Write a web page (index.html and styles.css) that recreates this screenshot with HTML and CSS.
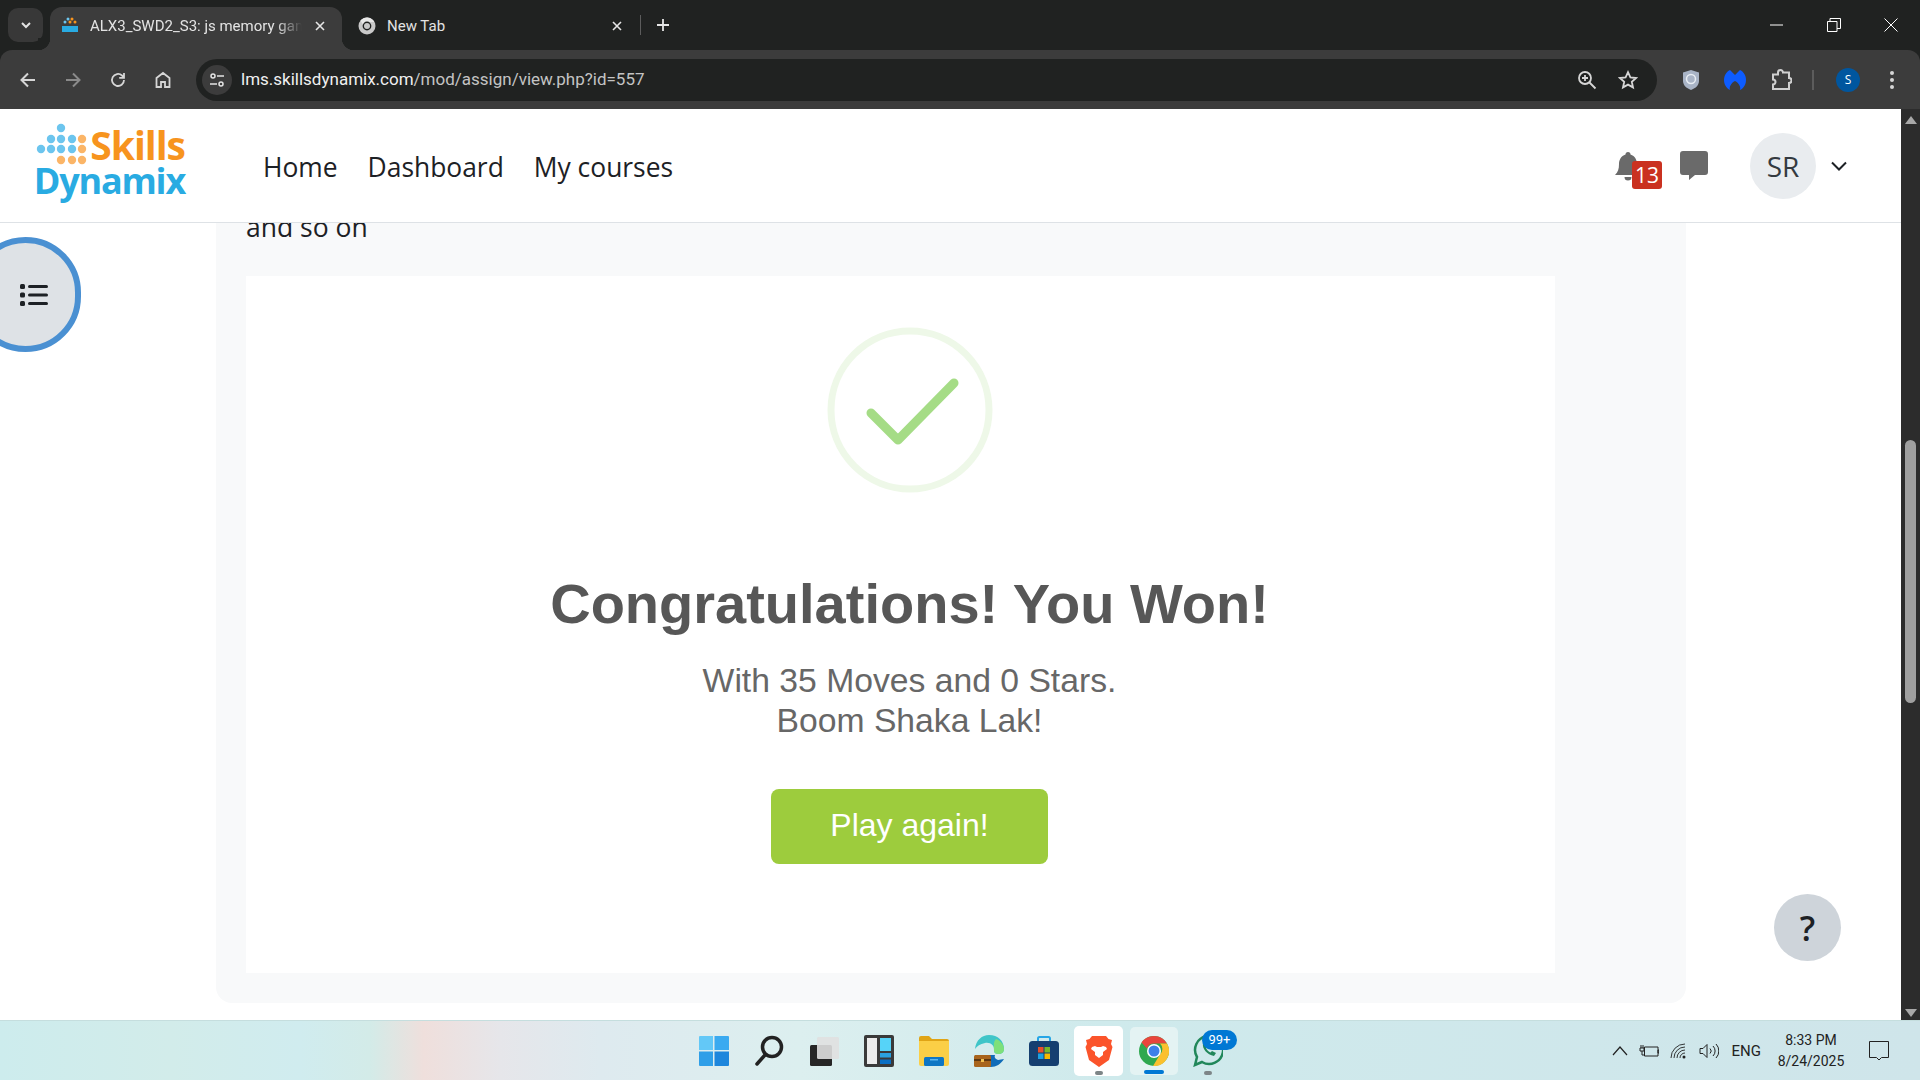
FILE: index.html
```html
<!DOCTYPE html>
<html lang="en">
<head>
  <meta charset="UTF-8" />
  <title>ALX3_SWD2_S3: js memory game</title>
  <link rel="stylesheet" href="styles.css">
</head>
<body>
  <!-- Browser tabs -->
  <div class="tabstrip">
    <button class="tab-search">
      <svg width="14" height="14" viewBox="0 0 14 14"><path d="M3 5l4 4 4-4" fill="none" stroke="#e3e3e3" stroke-width="2"/></svg>
    </button>
    <div class="tab tab-active">
      <svg class="favicon" width="20" height="20" viewBox="0 0 20 20">
        <circle cx="8" cy="3" r="1.5" fill="#6cc5ee"/><circle cx="12" cy="3" r="1.5" fill="#f7941e"/><circle cx="5" cy="6" r="1.5" fill="#6cc5ee"/><circle cx="10" cy="6" r="1.5" fill="#f7941e"/><circle cx="15" cy="6" r="1.5" fill="#f7941e"/>
        <rect x="2" y="10" width="16" height="6" fill="#29abe2"/>
      </svg>
      <span class="tab-title">ALX3_SWD2_S3: js memory game</span>
      <svg class="tab-close" width="12" height="12" viewBox="0 0 12 12"><path d="M2 2l8 8M10 2l-8 8" stroke="#e6e6e6" stroke-width="1.6"/></svg>
    </div>
    <div class="tab">
      <svg class="favicon" width="18" height="18" viewBox="0 0 18 18">
        <circle cx="9" cy="9" r="8.500" fill="#c9c9c9"/><path d="M9 5h7.400A8.500 8.500 0 0 0 2.400 3.600L6 9a3 3 0 0 1 3-4z" fill="#e8e8e8"/><circle cx="9" cy="9" r="4.400" fill="#202221"/><circle cx="9" cy="9" r="3" fill="#c9c9c9"/>
      </svg>
      <span class="tab-title">New Tab</span>
      <svg class="tab-close" width="12" height="12" viewBox="0 0 12 12"><path d="M2 2l8 8M10 2l-8 8" stroke="#e6e6e6" stroke-width="1.6"/></svg>
    </div>
    <div class="tab-sep"></div>
    <svg class="tab-new" width="14" height="14" viewBox="0 0 14 14"><path d="M7 1v12M1 7h12" stroke="#e6e6e6" stroke-width="1.8"/></svg>
    <div class="window-btns">
      <svg width="14" height="14" viewBox="0 0 14 14"><path d="M0 7h13" stroke="#fff" stroke-width="1"/></svg>
      <svg width="14" height="14" viewBox="0 0 14 14"><path d="M.5 3.500h9.500v10H.5zM3 3.500V.5h10.500v10H10" fill="none" stroke="#fff"/></svg>
      <svg width="14" height="14" viewBox="0 0 14 14"><path d="M.5.5l13 13M13.500.5l-13 13" stroke="#fff"/></svg>
    </div>
  </div>

  <!-- Browser toolbar -->
  <div class="toolbar">
    <svg class="tb-icon" width="20" height="20" viewBox="0 0 20 20"><path d="M17 10H4M10 3.500 3.500 10l6.500 6.500" fill="none" stroke="#d6d6d6" stroke-width="2"/></svg>
    <svg class="tb-icon" width="20" height="20" viewBox="0 0 20 20"><path d="M3 10h13M10 3.500l6.500 6.500-6.500 6.500" fill="none" stroke="#8a8a8a" stroke-width="2"/></svg>
    <svg class="tb-icon" width="20" height="20" viewBox="0 0 20 20"><path d="M16 10a6 6 0 1 1-2-4.500L16 7.500M16 3v4.800h-4.800" fill="none" stroke="#d6d6d6" stroke-width="1.800"/></svg>
    <svg class="tb-icon" width="20" height="20" viewBox="0 0 20 20"><path d="M3.500 17V8L10 3l6.500 5v9h-4.500v-5H8v5z" fill="none" stroke="#d6d6d6" stroke-width="1.800"/></svg>
    <div class="omnibox">
      <span class="site-info">
        <svg width="18" height="18" viewBox="0 0 18 18"><g fill="none" stroke="#e3e3e3" stroke-width="1.500"><circle cx="5" cy="5" r="2"/><path d="M9 5h7M2 13h7"/><circle cx="13" cy="13" r="2"/></g></svg>
      </span>
      <span class="url"><span class="url-host">lms.skillsdynamix.com</span>/mod/assign/view.php?id=557</span>
      <svg class="omni-zoom" width="20" height="20" viewBox="0 0 20 20"><g fill="none" stroke="#d6d6d6" stroke-width="1.800"><circle cx="8" cy="8" r="6"/><path d="M12.500 12.500 18.500 18.500M5 8h6M8 5v6"/></g></svg>
      <svg class="omni-star" width="20" height="20" viewBox="0 0 20 20"><path d="M10 2.200l2.400 5.200 5.600.6-4.200 3.800 1.200 5.600L10 14.600l-5 2.800 1.200-5.600L2 8l5.600-.6z" fill="none" stroke="#d6d6d6" stroke-width="1.800"/></svg>
    </div>
    <div class="ext-icons">
      <svg width="18" height="22" viewBox="0 0 18 22"><path d="M9 1l8 2.500V12c0 4.500-4 7.500-8 9-4-1.500-8-4.500-8-9V3.500z" fill="#a9b4c6"/><circle cx="9" cy="10" r="4.500" fill="none" stroke="#e8edf3" stroke-width="1.500"/></svg>
      <svg width="22" height="20" viewBox="0 0 22 20"><path d="M6 0 11 5l5-5c4 2 6 6 6 10 0 4-2 8-6 10 1-3-1-7-5-9-4 2-6 6-5 9-4-2-6-6-6-10C0 6 2 2 6 0z" fill="#0d5cff"/></svg>
      <svg width="22" height="22" viewBox="0 0 22 22"><path d="M8 3.500a2.500 2.500 0 0 1 5 0H19v5.500a2.500 2.500 0 0 1 0 5V20H3v-4.500a2.500 2.500 0 0 0 0-5V5.500h5z" fill="none" stroke="#d0d0d0" stroke-width="2"/></svg>
      <span class="ext-sep"></span>
      <span class="profile-dot">S</span>
      <svg class="ext-menu" width="6" height="20" viewBox="0 0 6 20"><g fill="#d6d6d6"><circle cx="3" cy="3" r="2"/><circle cx="3" cy="10" r="2"/><circle cx="3" cy="17" r="2"/></g></svg>
    </div>
  </div>

  <div class="viewport">
    <div class="page">
      <!-- Site header -->
      <header class="site-header">
        <div class="logo">
          <svg class="logo-dots" width="52" height="42" viewBox="0 0 52 42">
            <g fill="#6cc5ee">
              <circle cx="25" cy="5" r="4.200"/>
              <circle cx="15" cy="16" r="4.200"/><circle cx="25" cy="16" r="4.200"/><circle cx="36" cy="16" r="4.200"/>
              <circle cx="5" cy="26" r="4.200"/><circle cx="15" cy="26" r="4.200"/><circle cx="25" cy="26" r="4.200"/><circle cx="36" cy="26" r="4.200"/>
            </g>
            <g fill="#fbb567">
              <circle cx="46" cy="16" r="4.200"/><circle cx="46" cy="26" r="4.200"/>
              <circle cx="25" cy="37" r="4.200"/><circle cx="36" cy="37" r="4.200"/><circle cx="46" cy="37" r="4.200"/>
            </g>
          </svg>
          <span class="logo-skills">Skills</span>
          <span class="logo-dynamix">Dynamix</span>
        </div>
        <nav class="main-nav">
          <a href="#">Home</a>
          <a href="#">Dashboard</a>
          <a href="#">My courses</a>
        </nav>
        <div class="user-area">
          <div class="bell">
            <svg width="26" height="30" viewBox="0 0 26 30"><path d="M13 0a2.500 2.500 0 0 1 2.500 2.500C20 4 22 8 22 12c0 5 1 8 4 11H0c3-3 4-6 4-11 0-4 2-8 6.500-9.500A2.500 2.500 0 0 1 13 0zM9.500 25h7a3.500 3.500 0 0 1-7 0z" fill="#6a6a6a"/></svg>
            <span class="bell-count">13</span>
          </div>
          <svg class="chat" width="28" height="29" viewBox="0 0 28 29"><path d="M3 0h22a3 3 0 0 1 3 3v18a3 3 0 0 1-3 3H15l-6 5v-5H3a3 3 0 0 1-3-3V3a3 3 0 0 1 3-3z" fill="#6a6a6a"/></svg>
          <div class="avatar">SR</div>
          <svg class="user-caret" width="16" height="10" viewBox="0 0 16 10"><path d="M1 1.500l7 7 7-7" fill="none" stroke="#1d2125" stroke-width="2"/></svg>
        </div>
      </header>

      <!-- Assignment content, scrolled part way down -->
      <main class="content">
        <button class="drawer-toggle">
          <svg width="30" height="26" viewBox="0 0 30 26">
            <g fill="#1d2125"><rect x="1" y="2" width="5" height="5" rx="1.500"/><rect x="1" y="10.500" width="5" height="5" rx="1.500"/><rect x="1" y="19" width="5" height="5" rx="1.500"/>
            <rect x="9" y="3" width="20" height="3" rx="1.500"/><rect x="9" y="11.500" width="20" height="3" rx="1.500"/><rect x="9" y="20" width="20" height="3" rx="1.500"/></g>
          </svg>
        </button>
        <section class="panel">
          <p class="panel-text">and so on</p>
          <div class="win-card">
            <svg class="win-check" width="166" height="166" viewBox="0 0 166 166">
              <circle cx="83" cy="83" r="79" fill="none" stroke="#eef8e8" stroke-width="7"/>
              <path d="M44 86l27 27 56-57" fill="none" stroke="#a5dc86" stroke-width="9" stroke-linecap="round" stroke-linejoin="round"/>
            </svg>
            <h2 class="win-title">Congratulations! You Won!</h2>
            <p class="win-text">With 35 Moves and 0 Stars.<br>Boom Shaka Lak!</p>
            <button class="play-again">Play again!</button>
          </div>
        </section>
        <button class="help-btn">?</button>
      </main>
    </div>

    <!-- Browser scrollbar -->
    <div class="scrollbar">
      <svg width="14" height="10" viewBox="0 0 14 10"><path d="M7 1l6 8H1z" fill="#a8a8a8"/></svg>
      <div class="scroll-track"><div class="scroll-thumb"></div></div>
      <svg width="14" height="10" viewBox="0 0 14 10"><path d="M7 9l6-8H1z" fill="#a8a8a8"/></svg>
    </div>
  </div>

  <!-- Windows taskbar -->
  <footer class="taskbar">
    <div class="task-apps">
      <div class="app">
        <svg width="30" height="30" viewBox="0 0 30 30"><path d="M0 1a1 1 0 0 1 1-1h13v14H0z" fill="#63c8f7"/><path d="M15.500 0H29a1 1 0 0 1 1 1v13H15.500z" fill="#3aaaf0"/><path d="M0 15.500h14V30H1a1 1 0 0 1-1-1z" fill="#2f9fe8"/><path d="M15.500 15.500H30V29a1 1 0 0 1-1 1H15.500z" fill="#1d86dc"/></svg>
      </div>
      <div class="app">
        <svg width="30" height="32" viewBox="0 0 30 32"><circle cx="18" cy="12" r="9.500" fill="none" stroke="#222" stroke-width="3.500"/><path d="M11 20 3 29" stroke="#222" stroke-width="3.500" stroke-linecap="round"/></svg>
      </div>
      <div class="app">
        <svg width="30" height="30" viewBox="0 0 30 30"><rect x="1" y="9" width="22" height="21" rx="1.500" fill="#262626"/><rect x="8" y="1" width="22" height="22" rx="1.500" fill="#e0e0e0" opacity=".9"/></svg>
      </div>
      <div class="app">
        <svg width="30" height="32" viewBox="0 0 30 32"><rect width="30" height="32" rx="2" fill="#3a3a3a"/><rect x="3" y="3" width="10" height="26" fill="#ececec"/><rect x="16" y="3" width="11" height="13" fill="#56d3f8"/><rect x="16" y="18" width="11" height="4.500" fill="#2aa2e0"/><rect x="16" y="24.500" width="11" height="4.500" fill="#0a6fc4"/></svg>
      </div>
      <div class="app">
        <svg width="30" height="30" viewBox="0 0 30 30"><path d="M0 2a2 2 0 0 1 2-2h8l3 3h15a2 2 0 0 1 2 2v3H0z" fill="#e0a415"/><path d="M0 5h30v23a2 2 0 0 1-2 2H2a2 2 0 0 1-2-2z" fill="#fbcf46"/><rect x="5" y="21" width="20" height="9" rx="1.500" fill="#0e76c4"/><rect x="11" y="23" width="8" height="1.500" fill="#5ab6ef"/></svg>
      </div>
      <div class="app">
        <svg width="30" height="32" viewBox="0 0 30 32"><path d="M1 14C2 5 8 0 15 0c9 0 15 6 15 14 0 3-2 5-6 5-2 0-4-1-4-3 1-6-4-9-9-8-5 1-8 3-10 6z" fill="#3fc5c8"/><path d="M22 4c5 2 8 6 8 10 0 3-2 5-6 5-2 0-4-1-4-3 0-5-1-9 2-12z" fill="#7ee07a"/><path d="M10 32c-5-2-9-6-9-12h20c-1 2 0 4 3 5l6-1c-3 5-8 8-13 8z" fill="#0f6cb8"/><rect x="0" y="20" width="17" height="12" rx="1.500" fill="#a8641c"/><rect x="0" y="24" width="17" height="2" fill="#5e3710"/><rect x="7" y="24" width="3" height="3" fill="#f2c04f"/></svg>
      </div>
      <div class="app">
        <svg width="30" height="30" viewBox="0 0 30 30"><path d="M9 5V2.500A1.500 1.500 0 0 1 10.500 1h9A1.500 1.500 0 0 1 21 2.500V5" fill="none" stroke="#27a6e6" stroke-width="2"/><rect y="5" width="30" height="25" rx="3.500" fill="#153f70"/><rect x="9" y="11" width="5.500" height="5.500" fill="#e8502a"/><rect x="15.500" y="11" width="5.500" height="5.500" fill="#76b82a"/><rect x="9" y="17.500" width="5.500" height="5.500" fill="#1ba1e2"/><rect x="15.500" y="17.500" width="5.500" height="5.500" fill="#f7b900"/></svg>
      </div>
      <div class="app app-pinned">
        <svg width="28" height="32" viewBox="0 0 28 32"><path d="M7 1h14l2.500 3L27 5l-1 4 1.500 3-3.500 13-10 7-10-7L.5 12 2 9 1 5l3.500-1z" fill="#fb542b"/><path d="M7 12l3-1 2 1h4l2-1 3 1 1 2-4 3v3l-4 3-4-3v-3l-4-3z" fill="#fff"/></svg>
        <span class="run-dot"></span>
      </div>
      <div class="app app-active">
        <svg width="30" height="30" viewBox="0 0 30 30"><circle cx="15" cy="15" r="15" fill="#2fa84f"/><path d="M15 0a15 15 0 0 1 13 7.500H15a7.500 7.500 0 0 0-7 5L2.500 6.500A15 15 0 0 1 15 0z" fill="#e8453c"/><path d="M28 7.500A15 15 0 0 1 14 30l7-11.500A7.500 7.500 0 0 0 21 7.500z" fill="#fbc02d"/><circle cx="15" cy="15" r="7" fill="#fff"/><circle cx="15" cy="15" r="5.500" fill="#3d7fe8"/></svg>
        <span class="run-bar"></span>
      </div>
      <div class="app app-whatsapp">
        <svg width="30" height="32" viewBox="0 0 30 32"><path d="M2 30l2-8A14 14 0 1 1 9 27z" fill="none" stroke="#21875a" stroke-width="2.500"/><path d="M10 9c-1 4 4 11 11 12l2-3-4-2-1.500 1.500c-2-1-3.500-2.500-4.500-4.500l1.500-1.500L13 8z" fill="#21875a"/></svg>
        <span class="app-badge">99+</span>
        <span class="run-dot"></span>
      </div>
    </div>
    <div class="tray">
      <svg width="16" height="10" viewBox="0 0 16 10"><path d="M1 9l7-8 7 8" fill="none" stroke="#222" stroke-width="1.200"/></svg>
      <svg width="20" height="14" viewBox="0 0 20 14"><path d="M5.500 3H19v9H5.500zM19 6h1v3h-1zM2 1v3M4 1v3M1 4h4v3H1zM3 7v4h2.500" fill="none" stroke="#222"/></svg>
      <svg width="18" height="16" viewBox="0 0 18 16"><g fill="none" stroke="#222" stroke-width=".9"><path d="M1 15A14 14 0 0 1 15 1M4 15A11 11 0 0 1 15 4M7 15a8 8 0 0 1 8-8M10 15a5 5 0 0 1 5-5"/></g><circle cx="14" cy="14" r="1.500" fill="#222"/></svg>
      <svg width="20" height="16" viewBox="0 0 20 16"><g fill="none" stroke="#222"><path d="M1 5.500h3L8 1.500v13l-4-4H1zM11 5.500a3.500 3.500 0 0 1 0 5M14 3a7 7 0 0 1 0 10M17 1a10 10 0 0 1 0 14"/></g></svg>
      <span class="tray-lang">ENG</span>
      <div class="tray-clock"><span>8:33 PM</span><span>8/24/2025</span></div>
      <svg class="tray-notif" width="20" height="20" viewBox="0 0 20 20"><path d="M.5.500h19v16h-7L10 19l-2.500-2.500h-7z" fill="none" stroke="#222"/></svg>
    </div>
  </footer>
</body>
</html>
```

FILE: styles.css
```css
* {
  box-sizing: border-box;
}

html, body {
  height: 100%;
}

body {
  margin: 0;
  display: flex;
  flex-direction: column;
  height: 1080px;
  overflow: hidden;
  font-family: "Open Sans", "Noto Sans", sans-serif;
  background-color: #202221;
}

button {
  border: none;
  padding: 0;
  font-family: inherit;
}

/* Tabs */
.tabstrip {
  height: 50px;
  flex: none;
  display: flex;
  align-items: flex-end;
  background-color: #202221;
  padding-left: 8px;
}

.tab-search {
  width: 35px;
  height: 34px;
  margin-bottom: 8px;
  border-radius: 10px;
  background-color: #383838;
  display: flex;
  align-items: center;
  justify-content: center;
}

.tab {
  width: 292px;
  height: 43px;
  margin-left: 7px;
  padding: 0 16px 6px 10px;
  display: flex;
  align-items: center;
  border-radius: 12px 12px 0 0;
  color: #e3e3e3;
  font-family: "Roboto", sans-serif;
  font-size: 15px;
  position: relative;
}

.tab + .tab {
  width: 284px;
  margin-left: 0;
  padding-left: 16px;
  padding-right: 3px;
}

.tab + .tab .favicon {
  margin-right: 11px;
}

.tab-active {
  background-color: #3c3c3c;
}

.tab-active::before,
.tab-active::after {
  content: "";
  position: absolute;
  bottom: 0;
  width: 12px;
  height: 12px;
}

.tab-active::before {
  left: -12px;
  background: radial-gradient(circle at 0 0, #202221 12px, #3c3c3c 12.5px);
}

.tab-active::after {
  right: -12px;
  background: radial-gradient(circle at 100% 0, #202221 12px, #3c3c3c 12.5px);
}

.favicon {
  flex: none;
  margin-right: 10px;
}

.tab-title {
  flex: 1;
  white-space: nowrap;
  overflow: hidden;
}

.tab-active .tab-title {
  -webkit-mask-image: linear-gradient(90deg, #000 88%, transparent 100%);
  mask-image: linear-gradient(90deg, #000 88%, transparent 100%);
}

.tab-close {
  flex: none;
  margin-left: 12px;
}

.tab-sep {
  width: 1px;
  height: 20px;
  margin: 0 0 15px 14px;
  background-color: #5c5c5c;
}

.tab-new {
  margin: 0 0 18px 15px;
}

.window-btns {
  margin-left: auto;
  width: 150px;
  padding-right: 22px;
  align-self: center;
  display: flex;
  justify-content: space-between;
}

/* Toolbar */
.toolbar {
  height: 59px;
  flex: none;
  display: flex;
  align-items: center;
  background-color: #3c3c3c;
  border-radius: 12px 12px 0 0;
  padding: 0 25px 0 18px;
}

.tb-icon {
  flex: none;
  margin-right: 25px;
}

.omnibox {
  width: 1462px;
  height: 42px;
  margin-left: -2px;
  padding-right: 19px;
  display: flex;
  align-items: center;
  border-radius: 21px;
  background-color: #202221;
  color: #c4c4c4;
  font-family: "Roboto", sans-serif;
  font-size: 17px;
}

.site-info {
  width: 30px;
  height: 30px;
  margin: 0 9px 0 6px;
  display: flex;
  align-items: center;
  justify-content: center;
  border-radius: 50%;
  background-color: #3c3c3c;
}

.url {
  flex: 1;
  padding-bottom: 2px;
}

.url-host {
  color: #f0f0f0;
}

.omni-star {
  margin-left: 21px;
}

.ext-icons {
  margin-left: 25px;
  display: flex;
  align-items: center;
  gap: 24px;
}

.ext-sep {
  width: 2px;
  height: 20px;
  margin: 0 -2px 0 -4px;
  background-color: #5c5c5c;
}

.ext-menu {
  margin-left: 5px;
}

.profile-dot {
  width: 24px;
  height: 24px;
  border-radius: 50%;
  background-color: #00569f;
  color: #fff;
  font-size: 12px;
  line-height: 24px;
  text-align: center;
}

/* Page */
.viewport {
  flex: 1;
  min-height: 0;
  display: flex;
  background-color: #fff;
}

.page {
  flex: 1;
  min-width: 0;
  display: flex;
  flex-direction: column;
}

.site-header {
  height: 114px;
  flex: none;
  display: flex;
  align-items: center;
  border-bottom: 1px solid #dee2e6;
  background-color: #fff;
  padding-left: 35px;
  position: relative;
  z-index: 2;
}

.logo {
  position: relative;
  width: 152px;
  height: 82px;
  margin-top: -3px;
  flex: none;
}

.logo-dots {
  position: absolute;
  left: 1px;
  top: 0;
}

.logo-skills,
.logo-dynamix {
  position: absolute;
  right: 2px;
  font-family: "Open Sans", sans-serif;
  font-weight: 700;
  line-height: 32px;
  white-space: nowrap;
}

.logo-skills {
  top: 6px;
  color: #f7941e;
  font-size: 39px;
  letter-spacing: -1px;
}

.logo-dynamix {
  top: 42px;
  color: #29abe2;
  font-size: 36px;
  letter-spacing: -1.2px;
}

.main-nav {
  display: flex;
  gap: 30px;
  margin: 2px 0 0 76px;
  font-size: 26.4px;
}

.main-nav a {
  color: #1d2125;
  text-decoration: none;
}

.user-area {
  margin-left: auto;
  padding-right: 54px;
  display: flex;
  align-items: center;
}

.bell {
  position: relative;
  width: 26px;
  height: 30px;
  margin-top: 2px;
}

.bell-count {
  position: absolute;
  left: 17px;
  top: 9px;
  width: 30px;
  height: 28px;
  border-radius: 3px;
  background-color: #ca3120;
  color: #fff;
  font-size: 21px;
  line-height: 28px;
  text-align: center;
}

.chat {
  margin: 0 0 0 39px;
}

.avatar {
  width: 66px;
  height: 66px;
  margin-left: 42px;
  border-radius: 50%;
  background-color: #e9ecef;
  color: #343a40;
  font-size: 28px;
  line-height: 66px;
  text-align: center;
}

.user-caret {
  margin-left: 15px;
}

.content {
  flex: 1;
  min-height: 0;
  position: relative;
  overflow: hidden;
  padding-left: 216px;
}

.drawer-toggle {
  position: absolute;
  left: -30px;
  top: 14px;
  width: 111px;
  height: 115px;
  display: flex;
  align-items: center;
  justify-content: center;
  padding-left: 16px;
  border: 6px solid #4a90d2;
  border-radius: 58px;
  background-color: #dee2e6;
}

.panel {
  display: flow-root;
  width: 1470px;
  height: 780px;
  padding: 0 30px;
  border-radius: 0 0 16px 16px;
  background-color: #f8f9fa;
}

.panel-text {
  margin: -14px 0 0;
  height: 67px;
  color: #1d2125;
  font-size: 26.5px;
  line-height: 36px;
}

.win-card {
  width: 1309px;
  height: 697px;
  padding: 51px 0 0 18px;
  display: flex;
  flex-direction: column;
  align-items: center;
  background-color: #fff;
  font-family: "Liberation Sans", Arial, sans-serif;
}

.win-title {
  margin: 75px 0 0;
  color: #575757;
  font-size: 56px;
  line-height: 72px;
}

.win-text {
  margin: 20px 0 0;
  color: #676767;
  font-size: 33.7px;
  line-height: 40px;
  text-align: center;
}

.play-again {
  width: 277px;
  height: 75px;
  margin-top: 49px;
  padding-bottom: 2px;
  border-radius: 8px;
  background-color: #9dcc3d;
  color: #fff;
  font-family: inherit;
  font-size: 32px;
}

.help-btn {
  position: absolute;
  left: 1774px;
  top: 671px;
  width: 67px;
  height: 67px;
  border-radius: 50%;
  background-color: #ced4da;
  color: #1d2125;
  font-size: 34px;
  font-weight: 600;
}

/* Scrollbar */
.scrollbar {
  width: 19px;
  flex: none;
  display: flex;
  flex-direction: column;
  align-items: center;
  padding: 6px 0 2px;
  background-color: #2c2c2c;
}

.scroll-track {
  flex: 1;
  width: 100%;
  padding-top: 315px;
}

.scroll-thumb {
  width: 11px;
  height: 263px;
  margin: 0 auto;
  border-radius: 6px;
  background-color: #9f9f9f;
}

/* Taskbar */
.taskbar {
  height: 60px;
  flex: none;
  position: relative;
  display: flex;
  align-items: center;
  border-top: 1px solid #c5dede;
  background: linear-gradient(90deg, #cdeced 0, #d2ecea 170px, #d0ecef 300px, #d3ebe8 370px, #efdfdc 424px, #e6e6ea 500px, #deeaef 600px, #dcefef 800px, #cfeaec 1100px, #cfe5ea 1920px);
  color: #222;
  font-family: "Roboto", sans-serif;
}

.task-apps {
  margin-left: 686px;
  display: flex;
  align-items: center;
}

.app {
  position: relative;
  width: 55px;
  height: 50px;
  display: flex;
  align-items: center;
  justify-content: center;
}

.app-pinned {
  width: 49px;
  height: 50px;
  margin: 0 7px 0 3px;
  border-radius: 5px;
  background-color: #fff;
}

.app-active {
  width: 48px;
  height: 48px;
  margin-right: 11px;
  border-radius: 5px;
  background-color: #e4f3f3;
}

.app-whatsapp {
  width: 38px;
}

.app-badge {
  position: absolute;
  left: 13px;
  top: 4px;
  width: 35px;
  height: 20px;
  border-radius: 10px;
  background-color: #0078d4;
  color: #fff;
  font-size: 13px;
  line-height: 20px;
  text-align: center;
}

.run-dot,
.run-bar {
  position: absolute;
  left: 50%;
  bottom: 1px;
  width: 8px;
  height: 4px;
  margin-left: -4px;
  border-radius: 2px;
  background-color: #7d8587;
}

.run-bar {
  width: 20px;
  margin-left: -10px;
  background-color: #0078d4;
}

.tray {
  position: absolute;
  right: 31px;
  top: 0;
  height: 59px;
  display: flex;
  align-items: center;
  gap: 11px;
}

.tray-lang {
  font-size: 15px;
  margin-left: 2px;
}

.tray-clock {
  width: 70px;
  margin-left: 4px;
  display: flex;
  flex-direction: column;
  align-items: center;
  font-size: 14px;
  line-height: 21px;
}

.tray-notif {
  margin-left: 12px;
}
```
